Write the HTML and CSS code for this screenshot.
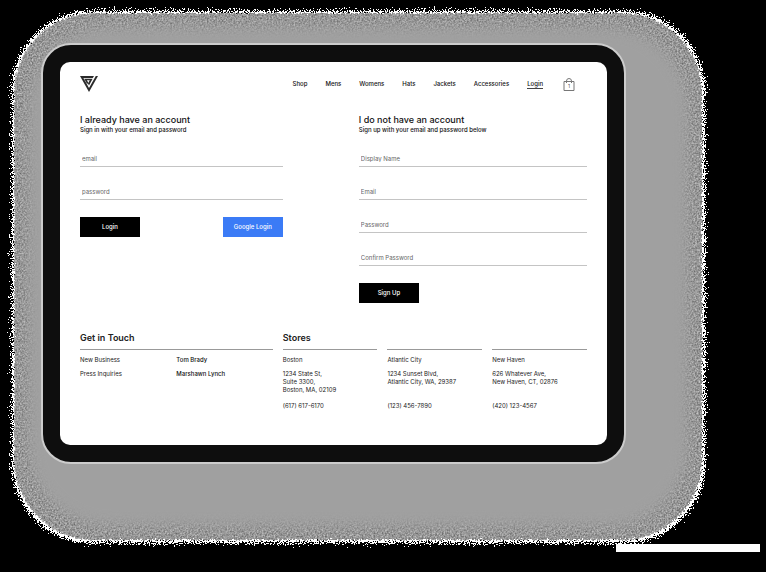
FILE: index.html
```html
<!DOCTYPE html>
<html lang="en">
<head>
<meta charset="utf-8">
<meta name="viewport" content="width=device-width, initial-scale=1">
<title>Login</title>
<link rel="stylesheet" href="styles.css">
</head>
<body>
<svg class="filters" width="0" height="0" aria-hidden="true">
  <filter id="ragged" x="-5%" y="-5%" width="110%" height="110%" color-interpolation-filters="sRGB">
    <feTurbulence type="fractalNoise" baseFrequency="0.8" numOctaves="2" seed="4" result="noise"/>
    <feDisplacementMap in="SourceGraphic" in2="noise" scale="16" xChannelSelector="R" yChannelSelector="G" result="shape"/>
    <feComponentTransfer in="shape"><feFuncA type="discrete" tableValues="0 1"/></feComponentTransfer>
  </filter>
  <filter id="grain" x="-5%" y="-5%" width="110%" height="110%" color-interpolation-filters="sRGB">
    <feTurbulence type="fractalNoise" baseFrequency="0.6" numOctaves="2" seed="9" result="noise"/>
    <feColorMatrix in="noise" type="matrix" values="0.6 0 0 0 0.29  0.6 0 0 0 0.29  0.6 0 0 0 0.29  0 0 0 0 1" result="gray"/>
    <feDisplacementMap in="SourceGraphic" in2="noise" scale="6" xChannelSelector="R" yChannelSelector="G" result="shape"/>
    <feComposite in="gray" in2="shape" operator="in"/>
  </filter>
</svg>
<div class="stage">
  <div class="halo halo-edge"></div>
  <div class="halo halo-grain"></div>
  <div class="halo halo-core"></div>
  <div class="tablet">
    <div class="screen">
      <header class="top">
        <a class="logo" href="#" aria-label="Home">
          <svg width="18" height="16" viewBox="0 0 18 16" fill="#2b2b2b" aria-hidden="true">
            <path d="M0 0H14L12.800 2H3.400L9 11.900L15.800 0H18L9 16Z"/>
            <path d="M4.200 2.800H12.600L9 9.500L7.900 7.600L9.800 4.300H6.900L8.200 6.600L7.200 8.200Z"/>
          </svg>
        </a>
        <nav class="menu">
          <a href="#">Shop</a>
          <a href="#">Mens</a>
          <a href="#">Womens</a>
          <a href="#">Hats</a>
          <a href="#">Jackets</a>
          <a href="#">Accessories</a>
          <a class="current" href="#">Login</a>
        </nav>
        <button class="bag" type="button" aria-label="Bag">
          <svg width="12" height="13" viewBox="0 0 12 13" fill="none" stroke="#777" aria-hidden="true">
            <path d="M1 3.500H11V12.500H1Z"/>
            <path d="M3.500 5V3A2.500 2.500 0 0 1 8.500 3V5"/>
          </svg>
          <span class="count">1</span>
        </button>
      </header>
      <main class="forms">
        <form class="signin">
          <h2>I already have an account</h2>
          <p>Sign in with your email and password</p>
          <input type="email" placeholder="email" aria-label="email">
          <input type="password" placeholder="password" aria-label="password">
          <div class="actions">
            <button type="button">Login</button>
            <button class="google" type="button">Google Login</button>
          </div>
        </form>
        <form class="signup">
          <h2>I do not have an account</h2>
          <p>Sign up with your email and password below</p>
          <input type="text" placeholder="Display Name" aria-label="Display Name">
          <input type="email" placeholder="Email" aria-label="Email">
          <input type="password" placeholder="Password" aria-label="Password">
          <input type="password" placeholder="Confirm Password" aria-label="Confirm Password">
          <div class="actions">
            <button type="button">Sign Up</button>
          </div>
        </form>
      </main>
      <footer class="bottom">
        <section>
          <h3>Get in Touch</h3>
          <dl class="contacts">
            <dt>New Business</dt><dd>Tom Brady</dd>
            <dt>Press Inquiries</dt><dd>Marshawn Lynch</dd>
          </dl>
        </section>
        <section>
          <h3>Stores</h3>
          <div class="stores">
            <div class="store">
              <h4>Boston</h4>
              <address>1234 State St,<br>Suite 3300,<br>Boston, MA, 02109</address>
              <span>(617) 617-6170</span>
            </div>
            <div class="store">
              <h4>Atlantic City</h4>
              <address>1234 Sunset Blvd,<br>Atlantic City, WA, 29387</address>
              <span>(123) 456-7890</span>
            </div>
            <div class="store">
              <h4>New Haven</h4>
              <address>626 Whatever Ave,<br>New Haven, CT, 02876</address>
              <span>(420) 123-4567</span>
            </div>
          </div>
        </section>
      </footer>
    </div>
  </div>
</div>
<div class="bar"></div>
</body>
</html>
```
FILE: styles.css
```css
* { box-sizing: border-box; }

body {
  margin: 0;
  min-height: 100vh;
  padding: 9px 6px 20px 10px;
  background: #000;
  color: #222;
  font: 500 6px/8px Inter, "Liberation Sans", sans-serif;
}

h2, h3, h4, p, dl, dd { margin: 0; }
a { color: inherit; text-decoration: none; }
.filters { position: absolute; }

.stage {
  position: relative;
  margin-right: 54px;
  padding: 34px 80px 80px 31px;
}

/* Soft gray halo with a ragged white rim */
.halo { position: absolute; }
.halo-edge {
  inset: 2px 1px 1px 2px;
  border-radius: 80px;
  background: #fff;
  filter: url(#ragged);
}
.halo-grain {
  inset: 4px;
  border-radius: 80px;
  background: #9e9e9e;
  filter: url(#grain);
}
.halo-core {
  inset: 18px;
  border-radius: 80px;
  background: #a0a0a0;
  filter: blur(7px);
}

.tablet {
  position: relative;
  padding: 17px;
  border: 2px solid #ccc;
  border-radius: 30px;
  background: #0e0e0e;
}
.screen {
  padding: 14px 20px 35px;
  border-radius: 10px;
  background: #fff;
}

.top {
  display: flex;
  align-items: center;
  height: 16px;
  padding-right: 12px;
}
.logo { margin-right: auto; }
.logo svg, .bag svg { display: block; }
.menu {
  display: flex;
  gap: 18px;
  color: #111;
}
.current { box-shadow: 0 1px #444; }
.bag {
  position: relative;
  margin-left: 20px;
  padding: 0;
  border: 0;
  background: none;
}
.count {
  position: absolute;
  inset: 4px 0 0;
  color: #555;
  font: 5px/8px Inter, sans-serif;
  text-align: center;
}

.forms {
  display: flex;
  justify-content: space-between;
  align-items: flex-start;
  padding-top: 22px;
}
.signin { width: 40%; }
.signup { width: 45%; }
h2 {
  color: #111;
  font-size: 9px;
  font-weight: 500;
  line-height: 12px;
}
.forms p {
  margin-bottom: 17px;
  color: #111;
}
input {
  display: block;
  width: 100%;
  height: 16px;
  margin-bottom: 17px;
  padding: 0 2px;
  border: 0;
  border-bottom: 1px solid #c4c4c4;
  border-radius: 0;
  background: none;
  color: #333;
  font: 400 6px/8px Inter, sans-serif;
}
input::placeholder { color: #666; }
.actions {
  display: flex;
  justify-content: space-between;
}
.actions button {
  width: 60px;
  height: 20px;
  padding: 0;
  border: 0;
  background: #000;
  color: #fff;
  font: 500 6px/8px Inter, sans-serif;
}
.actions .google { background: #3b7bf6; }

.bottom {
  display: grid;
  grid-template-columns: 38fr 60fr;
  gap: 10px;
  padding-top: 29px;
  font-weight: 400;
}
h3 {
  font-size: 9px;
  font-weight: 600;
  line-height: 12px;
  margin-bottom: 5px;
}
.contacts {
  display: grid;
  grid-template-columns: 1fr 1fr;
  row-gap: 6px;
  padding-top: 6px;
  border-top: 1px solid #999;
}
.contacts dd { color: #111; font-weight: 500; }
.stores {
  display: grid;
  grid-template-columns: repeat(3, 1fr);
  gap: 10px;
}
.store {
  padding-top: 6px;
  border-top: 1px solid #999;
}
h4 { font-size: 6px; font-weight: 400; margin-bottom: 6px; }
address {
  min-height: 24px;
  margin-bottom: 8px;
  font-style: normal;
}
.store span { display: block; }

.bar {
  position: relative;
  width: 144px;
  height: 8px;
  margin-left: auto;
  background: #fff;
}
```
